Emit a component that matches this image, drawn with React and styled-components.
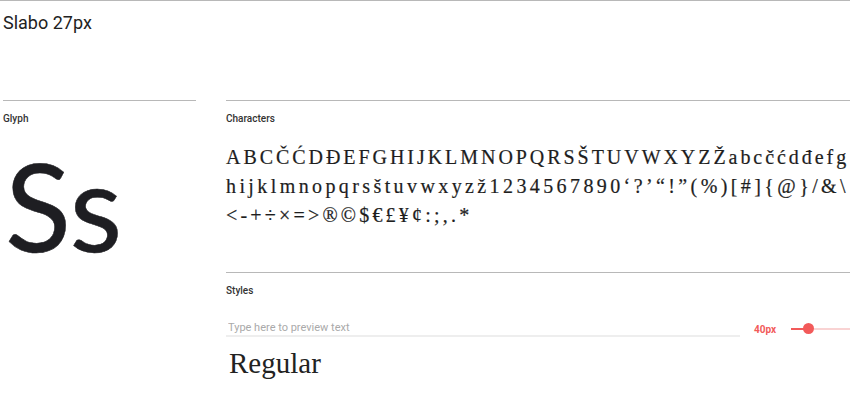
import styled, { createGlobalStyle } from 'styled-components';

const GlobalStyle = createGlobalStyle`
	html, body {
		margin: 0;
		padding: 0;
		background: #fff;
		font-family: Roboto, "Liberation Sans", sans-serif;
		color: #222;
	}
`;

const lines = [
	{ text: 'ABCČĆDĐEFGHIJKLMNOPQRSŠTUVWXYZŽabcčćdđefg', spacing: 2.95 },
	{ text: 'hijklmnopqrsštuvwxyzž1234567890‘?’“!”(%)[#]{@}/&\\', spacing: 3.4 },
	{ text: '<-+÷×=>®©$€£¥¢:;,.*', spacing: 3.2 },
];

const App = () => {
	return (
		<>
			<GlobalStyle />
			<Page>
				<Title>Slabo 27px</Title>
				<Body>
					<Section>
						<Label>Glyph</Label>
						<Glyph>Ss</Glyph>
					</Section>
					<Column>
						<Section>
							<Label>Characters</Label>
							<Chars>
								{lines.map((l) => (
									<CharLine key={l.text} $spacing={l.spacing}>
										{l.text}
									</CharLine>
								))}
							</Chars>
						</Section>
						<Section>
							<Label>Styles</Label>
							<Controls>
								<Preview placeholder="Type here to preview text" />
								<Size>40px</Size>
								<Slider>
									<Fill />
									<Thumb />
								</Slider>
							</Controls>
							<Sample>Regular</Sample>
						</Section>
					</Column>
				</Body>
			</Page>
		</>
	);
};

const Page = styled.div`
	width: 850px;
	height: 400px;
	overflow: hidden;
	border-top: 1px solid #b8b8b8;
	box-sizing: border-box;
`;

const Title = styled.h1`
	margin: 0;
	padding: 11px 0 0 3px;
	height: 88px;
	font-size: 18px;
	font-weight: 400;
	color: #222;
`;

const Body = styled.div`
	display: grid;
	grid-template-columns: 193px 1fr;
	column-gap: 30px;
	padding-left: 3px;
`;

const Column = styled.div`
	display: flex;
	flex-direction: column;
	gap: 42px;
`;

const Section = styled.section`
	border-top: 1px solid #b8b8b8;
	padding-top: 12px;
`;

const Label = styled.div`
	font-size: 10px;
	font-weight: 500;
	color: #333;
	line-height: 12px;
`;

const Glyph = styled.div`
	margin-top: 5px;
	padding-left: 2px;
	font-family: Lato, "Open Sans", sans-serif;
	font-size: 122px;
	line-height: 150px;
	color: #1e1e22;
	-webkit-text-stroke: 0.5px #1e1e22;
`;

const Chars = styled.div`
	margin-top: 18px;
	font-family: "Liberation Serif", serif;
	font-size: 20px;
	line-height: 29px;
	color: #1e1e1e;
`;

const CharLine = styled.div`
	white-space: nowrap;
	letter-spacing: ${(p) => p.$spacing}px;
	-webkit-text-stroke: 0.2px #1e1e1e;
`;

const Controls = styled.div`
	display: flex;
	align-items: center;
	margin-top: 24px;
`;

const Preview = styled.input`
	width: 514px;
	box-sizing: border-box;
	border: none;
	border-bottom: 2px solid #eee;
	padding: 0 2px 1px;
	font-family: Roboto, sans-serif;
	font-size: 11px;
	outline: none;
	&::placeholder {
		color: #aaa;
	}
`;

const Size = styled.span`
	margin-left: 14px;
	font-size: 10px;
	font-weight: 700;
	color: #f25a5a;
`;

const Slider = styled.div`
	position: relative;
	margin-left: 15px;
	width: 59px;
	height: 2px;
	background: #f9d3d3;
`;

const Fill = styled.div`
	width: 18px;
	height: 100%;
	background: #f25a5a;
`;

const Thumb = styled.div`
	position: absolute;
	left: 12px;
	top: -5px;
	width: 11px;
	height: 11px;
	border-radius: 50%;
	background: #f25a5a;
`;

const Sample = styled.div`
	margin-top: 10px;
	padding-left: 3px;
	font-family: "Liberation Serif", serif;
	font-size: 29px;
	color: #222;
`;

export default App;
